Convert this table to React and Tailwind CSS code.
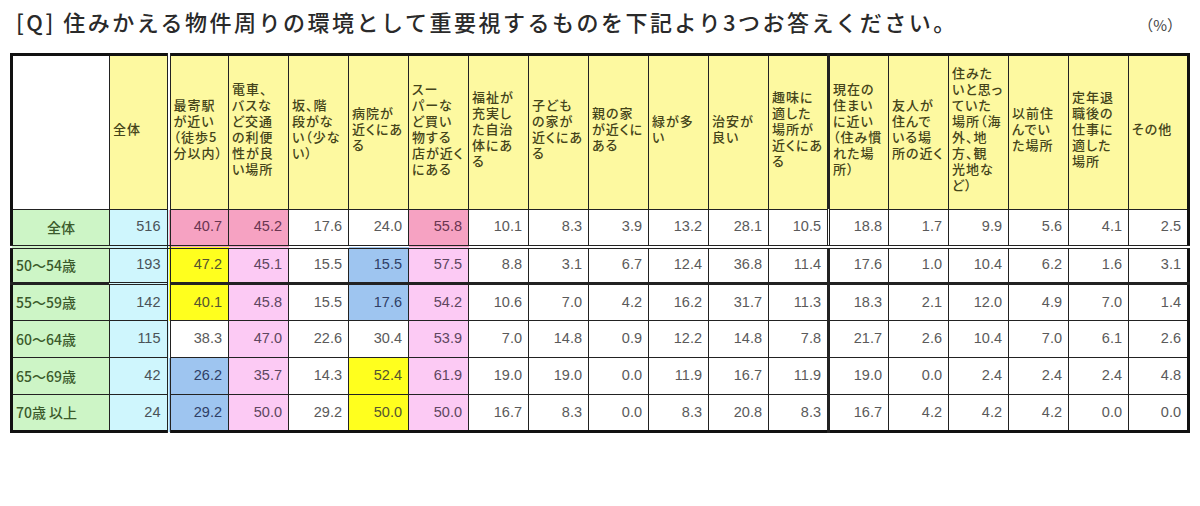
import React from 'react';

const headers = [
  ['全体'],
  ['最寄駅', 'が近い', '（徒歩5', '分以内）'],
  ['電車、', 'バスな', 'ど交通', 'の利便', '性が良', 'い場所'],
  ['坂、階', '段がな', 'い（少な', 'い）'],
  ['病院が', '近くにあ', 'る'],
  ['スー', 'パーな', 'ど買い', '物する', '店が近く', 'にある'],
  ['福祉が', '充実し', 'た自治', '体にあ', 'る'],
  ['子ども', 'の家が', '近くにあ', 'る'],
  ['親の家', 'が近くに', 'ある'],
  ['緑が多', 'い'],
  ['治安が', '良い'],
  ['趣味に', '適した', '場所が', '近くにあ', 'る'],
  ['現在の', '住まい', 'に近い', '（住み慣', 'れた場', '所）'],
  ['友人が', '住んで', 'いる場', '所の近く'],
  ['住みた', 'いと思っ', 'ていた', '場所（海', '外、地', '方、観', '光地な', 'ど）'],
  ['以前住', 'んでい', 'た場所'],
  ['定年退', '職後の', '仕事に', '適した', '場所'],
  ['その他'],
];

const rows = [
  { label: '全体', center: true, n: 516, v: [40.7, 45.2, 17.6, 24.0, 55.8, 10.1, 8.3, 3.9, 13.2, 28.1, 10.5, 18.8, 1.7, 9.9, 5.6, 4.1, 2.5], hl: { 0: 'pk', 1: 'pk', 4: 'pk' } },
  { label: '50～54歳', n: 193, v: [47.2, 45.1, 15.5, 15.5, 57.5, 8.8, 3.1, 6.7, 12.4, 36.8, 11.4, 17.6, 1.0, 10.4, 6.2, 1.6, 3.1], hl: { 0: 'y', 1: 'lp', 3: 'b', 4: 'lp' } },
  { label: '55～59歳', n: 142, v: [40.1, 45.8, 15.5, 17.6, 54.2, 10.6, 7.0, 4.2, 16.2, 31.7, 11.3, 18.3, 2.1, 12.0, 4.9, 7.0, 1.4], hl: { 0: 'y', 1: 'lp', 3: 'b', 4: 'lp' } },
  { label: '60～64歳', n: 115, v: [38.3, 47.0, 22.6, 30.4, 53.9, 7.0, 14.8, 0.9, 12.2, 14.8, 7.8, 21.7, 2.6, 10.4, 7.0, 6.1, 2.6], hl: { 1: 'lp', 4: 'lp' } },
  { label: '65～69歳', n: 42, v: [26.2, 35.7, 14.3, 52.4, 61.9, 19.0, 19.0, 0.0, 11.9, 16.7, 11.9, 19.0, 0.0, 2.4, 2.4, 2.4, 4.8], hl: { 0: 'b', 1: 'lp', 3: 'y', 4: 'lp' } },
  { label: '70歳 以上', n: 24, v: [29.2, 50.0, 29.2, 50.0, 50.0, 16.7, 8.3, 0.0, 8.3, 20.8, 8.3, 16.7, 4.2, 4.2, 4.2, 0.0, 0.0], hl: { 0: 'b', 1: 'lp', 3: 'y', 4: 'lp' } },
];

const fills = {
  pk: 'bg-[#f6a2c2] text-[#6a3550]',
  lp: 'bg-[#fccaf4] text-[#5e4660]',
  y: 'bg-[#ffff1e] text-[#555530]',
  b: 'bg-[#9ec5f0] text-[#2f3f66]',
  none: 'bg-white text-[#5a5a5a]',
};

// 全体 column gets a double rule, 趣味 column a heavy one
const sideBorder = (i) => {
  if (i === 0) return 'border-r-4 border-double';
  if (i === 11) return 'border-r-[3px]';
  return '';
};

const rowBorder = (r) => {
  if (r === 0) return 'border-b-4 border-double';
  if (r === 1) return 'border-b-[3px]';
  return '';
};

export default function App() {
  return (
    <div className="w-[1200px] h-[506px] bg-white pt-[6px] pl-[10px] font-['Noto_Sans_CJK_JP','Noto_Sans',sans-serif]">
      <div className="flex items-end justify-between pr-[18px]">
        <h1 className="pl-[6px] text-[22px] leading-[30px] tracking-[2.5px] text-[#2a2a2a] font-medium">
          [Q] 住みかえる物件周りの環境として重要視するものを下記より3つお答えください。
        </h1>
        <span className="text-[15px] leading-[22px] text-[#444]">（%）</span>
      </div>

      <table className="mt-[17px] w-[1177px] table-fixed border-collapse border-[3px] border-[#111]">
        <colgroup>
          <col className="w-[98px]" />
          <col className="w-[59px]" />
          {headers.slice(1).map((_, i) => (
            <col key={i} className="w-[60px]" />
          ))}
        </colgroup>
        <thead>
          <tr className="h-[155px]">
            <th className="border border-[#222] bg-white" />
            {headers.map((lines, i) => (
              <th
                key={i}
                className={`border border-[#222] bg-[#fdf9a0] px-[3px] pb-[8px] text-left align-middle text-[13px] leading-[16px] tracking-[1px] [font-feature-settings:'palt'] font-medium text-[#44441a] whitespace-nowrap overflow-hidden ${sideBorder(i)}`}
              >
                {lines.map((l, k) => (
                  <div key={k}>{l}</div>
                ))}
              </th>
            ))}
          </tr>
        </thead>
        <tbody>
          {rows.map((row, r) => (
            <tr key={row.label} className="h-[37px]">
              <td
                className={`border border-[#222] bg-[#cdf5c6] px-[3px] text-[14px] font-medium text-[#3b5a2c] ${row.center ? 'text-center' : 'text-left'} ${rowBorder(r)}`}
              >
                {row.label}
              </td>
              <td
                className={`border border-[#222] bg-[#cff6fd] pr-[6px] text-right font-['Liberation_Sans',sans-serif] text-[14.5px] text-[#4a5358] ${sideBorder(0)} ${rowBorder(r)}`}
              >
                {row.n}
              </td>
              {row.v.map((val, c) => (
                <td
                  key={c}
                  className={`border border-[#222] pr-[6px] text-right font-['Liberation_Sans',sans-serif] text-[14.5px] ${fills[row.hl[c] || 'none']} ${sideBorder(c + 1)} ${rowBorder(r)}`}
                >
                  {val.toFixed(1)}
                </td>
              ))}
            </tr>
          ))}
        </tbody>
      </table>
    </div>
  );
}
